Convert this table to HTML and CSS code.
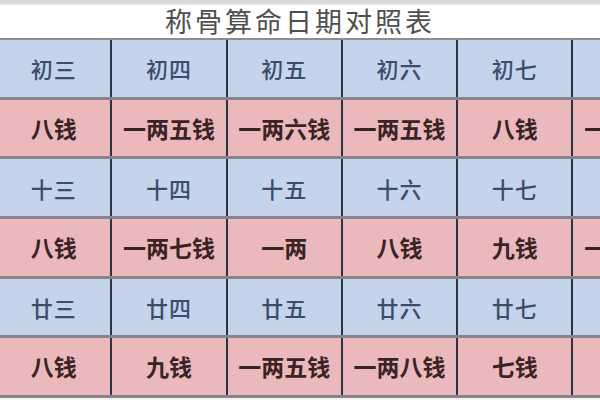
FILE: index.html
```html
<!DOCTYPE html>
<html lang="zh-CN">
<head>
<meta charset="utf-8">
<title>称骨算命日期对照表</title>
<link rel="stylesheet" href="styles.css">
</head>
<body>
<div class="page">
  <div class="topbar"></div>
  <h1 class="title">称骨算命日期对照表</h1>
  <div class="table">
    <div class="row day"><div class="cell">初三</div><div class="cell">初四</div><div class="cell">初五</div><div class="cell">初六</div><div class="cell">初七</div><div class="cell">初八</div></div>
    <div class="row weight"><div class="cell">八钱</div><div class="cell">一两五钱</div><div class="cell">一两六钱</div><div class="cell">一两五钱</div><div class="cell">八钱</div><div class="cell">一两六钱</div></div>
    <div class="row day"><div class="cell">十三</div><div class="cell">十四</div><div class="cell">十五</div><div class="cell">十六</div><div class="cell">十七</div><div class="cell">十八</div></div>
    <div class="row weight"><div class="cell">八钱</div><div class="cell">一两七钱</div><div class="cell">一两</div><div class="cell">八钱</div><div class="cell">九钱</div><div class="cell">一两八钱</div></div>
    <div class="row day"><div class="cell">廿三</div><div class="cell">廿四</div><div class="cell">廿五</div><div class="cell">廿六</div><div class="cell">廿七</div><div class="cell">廿八</div></div>
    <div class="row weight"><div class="cell">八钱</div><div class="cell">九钱</div><div class="cell">一两五钱</div><div class="cell">一两八钱</div><div class="cell">七钱</div><div class="cell">八钱</div></div>
  </div>
</div>
</body>
</html>
```
FILE: styles.css
```css
html, body {
  margin: 0;
  padding: 0;
  background: #ffffff;
  overflow: hidden;
}
.page {
  width: 600px;
  height: 400px;
  overflow: hidden;
  background: #f4f2f2;
  font-family: "Noto Sans CJK SC", "Noto Sans", sans-serif;
}
.topbar {
  height: 4px;
  background: #d9d9d9;
  border-bottom: 1px solid #ececec;
}
.title {
  margin: 0;
  height: 33px;
  padding-bottom: 3px;
  box-sizing: border-box;
  background: #ffffff;
  display: flex;
  align-items: center;
  justify-content: center;
  font-size: 27px;
  font-weight: 400;
  letter-spacing: 3px;
  color: #4f4f4f;
  line-height: 1;
}
.table {
  margin-left: -3px;
  width: 700px;
  border-top: 2px solid #8d8e95;
}
.row {
  display: flex;
  height: 59.7px;
  box-sizing: border-box;
  border-bottom: 3px solid #86858c;
}
.cell {
  width: 115.3px;
  flex: none;
  box-sizing: border-box;
  border-right: 2px solid #2c3345;
  display: flex;
  align-items: center;
  justify-content: center;
  font-size: 22px;
  line-height: 1;
}
.day {
  background: #c5d4ea;
}
.day .cell {
  color: #3c4d6c;
  font-weight: 500;
  letter-spacing: 1px;
}
.weight {
  background: #ebb9bc;
}
.weight .cell {
  color: #3a2325;
  font-weight: 700;
  font-size: 23px;
}
```
